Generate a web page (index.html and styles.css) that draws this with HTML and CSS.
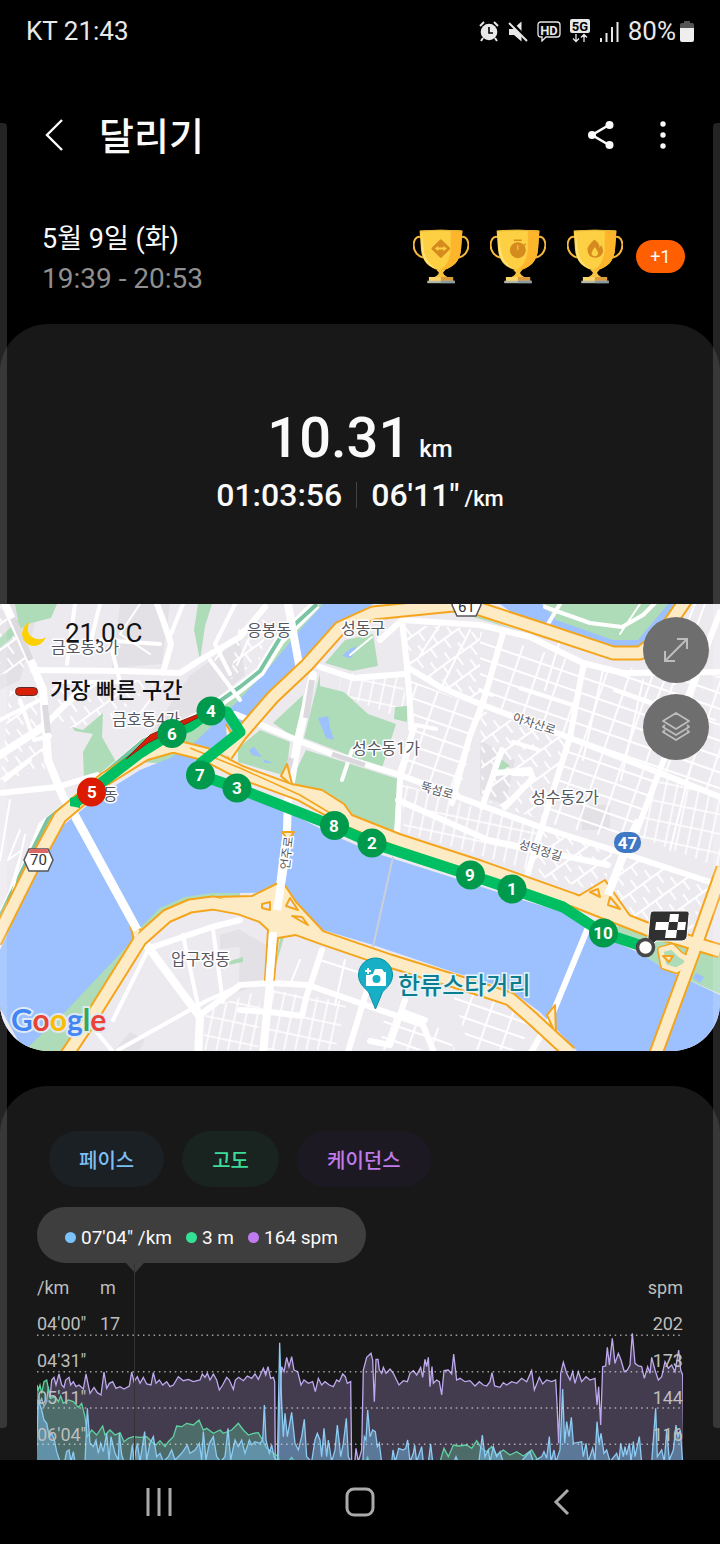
FILE: index.html
```html
<!DOCTYPE html>
<html lang="ko">
<head>
<meta charset="utf-8">
<meta name="viewport" content="width=device-width, initial-scale=1">
<title>달리기</title>
<link rel="stylesheet" href="styles.css">
</head>
<body>
<div class="edge edge-left"></div>
<div class="edge edge-right"></div>

<div class="status">
  <span>KT 21:43</span>
  <div class="status-icons">
    <svg width="20" height="21" viewBox="0 0 20 21" fill="none" stroke="#e8e8e8" stroke-width="2"><circle cx="10" cy="11" r="8.3" fill="#e8e8e8" stroke="none"/><path d="M1 5l4-4M19 5l-4-4M4 17l-2 3M16 17l2 3"/><path d="M10 6v6h4" stroke="#000" stroke-width="1.6"/></svg>
    <svg width="20" height="21" viewBox="0 0 20 21"><path d="M1 8h4l8.500-7.500v20L6 14H1z" fill="#e8e8e8"/><path d="M2.500 0.500L20 19" stroke="#000" stroke-width="3"/><path d="M1 2L19 20" stroke="#e8e8e8" stroke-width="2"/></svg>
    <svg class="hd" width="24" height="21" viewBox="0 0 24 21"><path d="M4 1h16q3 0 3 3v9q0 3-3 3H9l-4 4v-4H4q-3 0-3-3V4q0-3 3-3z" fill="none" stroke="#e8e8e8" stroke-width="1.300"/><text x="12" y="13.500" text-anchor="middle" font-size="13" font-weight="700" fill="#e8e8e8">HD</text></svg>
    <svg width="20" height="24" viewBox="0 0 20 24"><rect width="20" height="14" rx="2" fill="#e8e8e8"/><text x="10" y="12" text-anchor="middle" font-size="13" font-weight="700" fill="#000">5G</text><path d="M6 15v7M3 19.500l3 3 3-3M14 23v-7M11 18.500l3-3 3 3" fill="none" stroke="#e8e8e8" stroke-width="1.300"/></svg>
    <svg width="20" height="21" viewBox="0 0 20 21" stroke="#e8e8e8" stroke-width="2"><path d="M2 17v4M7.500 12v9M13 6v15M18.500 1v20"/></svg>
    <span class="battery-text">80%</span>
    <svg width="14" height="21" viewBox="0 0 14 21"><path d="M4 2V0h6v2h2q2 0 2 2v5H0V4q0-2 2-2z" fill="#555"/><path d="M0 7h14v12q0 2-2 2H2q-2 0-2-2z" fill="#eee"/></svg>
  </div>
</div>

<header class="bar">
  <button class="icon-btn" aria-label="뒤로"><svg width="20" height="32" viewBox="0 0 20 32"><path d="M18 1L3 16l15 15" fill="none" stroke="#fafafa" stroke-width="2.400"/></svg></button>
  <h1>달리기</h1>
  <button class="icon-btn share" aria-label="공유"><svg width="26" height="28" viewBox="0 0 26 28"><path d="M21 4L4 14l17 10" fill="none" stroke="#fafafa" stroke-width="2.600"/><g fill="#fafafa"><circle cx="21.500" cy="4" r="4"/><circle cx="4" cy="14" r="4"/><circle cx="21.500" cy="24" r="4"/></g></svg></button>
  <button class="icon-btn" aria-label="더보기"><svg width="6" height="28" viewBox="0 0 6 28" fill="#fafafa"><circle cx="3" cy="3" r="2.700"/><circle cx="3" cy="14" r="2.700"/><circle cx="3" cy="25" r="2.700"/></svg></button>
</header>

<section class="when">
  <div class="dates"><div>5월 9일 (화)</div><div class="time">19:39 - 20:53</div></div>
  <div class="awards">
    <svg width="0" height="0" class="defs"><defs>
      <symbol id="cup" viewBox="38 43 169 164">
        <path d="M65 67C38 58 34 96 48 115q7 9 20 13M180 67c27-9 31 29 17 48q-7 9-20 13" fill="none" stroke="#f5b83a" stroke-width="6"/>
        <path d="M58 47q64-6 129 0l-4 55c-3 45-33 60-61 66C94 162 65 147 62 102z" fill="#fdd043"/>
        <path d="M152 45l35 2-4 55c-3 45-33 60-61 66l-6-2c24-10 33-34 36-62z" fill="#fdb52b"/>
        <path d="M64 50l7 56c4 31 22 48 40 57-28-8-44-29-47-61z" fill="#fee27c"/>
        <path d="M60 48q62-5 125 0" fill="none" stroke="#e7b235" stroke-width="3"/>
        <path d="M108 165h28l-7 8q0 8 16 15h-45q16-7 16-15z" fill="#f8c23f"/>
        <path d="M86 187h73v12H86z" fill="#fcd56a"/><path d="M122 187h37v12h-37z" fill="#dd9c3c"/>
        <path d="M81 198h83v8H81z" fill="#b4b8a6"/><path d="M122 198h42v8h-42z" fill="#8a9ba1"/>
      </symbol>
    </defs></svg>
    <svg width="56" height="55" viewBox="38 43 169 164"><use href="#cup" x="38" y="43" width="169" height="164"/><rect x="101" y="80" width="42" height="42" rx="4" transform="rotate(45 122 101)" fill="#d68b1e"/><path d="M104 101l10-8v5h16v-5l10 8-10 8v-5h-16v5z" fill="#fdd043"/></svg>
    <svg width="56" height="55" viewBox="38 43 169 164"><use href="#cup" x="38" y="43" width="169" height="164"/><circle cx="122" cy="106" r="24" fill="#d68b1e"/><path d="M110 76h24M139 92l7-5" stroke="#d68b1e" stroke-width="4"/><path d="M122 90v16" stroke="#fdd043" stroke-width="3"/></svg>
    <svg width="56" height="55" viewBox="38 43 169 164"><use href="#cup" x="38" y="43" width="169" height="164"/><path d="M121 74q18 14 15 26l5-10q9 16 4 25-6 14-23 14-24-3-22-27 2-12 21-28z" fill="#d68b1e"/><path d="M122 97q14 16 8 24-8 7-16 0-6-9 8-24z" fill="#fdd043"/></svg>
    <span class="more">+1</span>
  </div>
</section>

<main>
<section class="card hero">
  <div class="distance"><span>10.31</span><small>km</small></div>
  <div class="pace"><span>01:03:56</span><i></i><span>06'11"</span><small>/km</small></div>
  <div class="map">
    <svg class="map-art" viewBox="0 604 720 447" role="img" aria-label="지도">
      <defs>
        <pattern id="s1" width="22" height="15" patternUnits="userSpaceOnUse" patternTransform="rotate(19)"><path d="M0 1h22M1 0v15" stroke="#fff" stroke-width="1.800"/></pattern>
        <pattern id="s2" width="11" height="19" patternUnits="userSpaceOnUse" patternTransform="rotate(12)"><path d="M0 1h11M1 0v19" stroke="#fff" stroke-width="1.500"/></pattern>
        <pattern id="s3" width="17" height="21" patternUnits="userSpaceOnUse" patternTransform="rotate(-36)"><path d="M0 1h17M1 0v12M10 12v9" stroke="#fff" stroke-width="1.800"/></pattern>
      </defs>
      <rect y="604" width="720" height="447" fill="#edeaef"/>
      <g fill="#e4e1e6">
        <path d="M0 604h40L20 680 0 690zM120 604h50l-8 60-50 4zM240 640l-50 35-40 60 40-15 55-45zM480 740l35 20-10 45-25-10zM580 805h30v25h-28zM240 930l35 20-6 30-30 12zM220 935l20-6v18l-20 2zM115 1050l15-18 15 8-5 10z"/>
      </g>
      <!-- side streets -->
      <path d="M480 632l103 32 137 12v118l-60-22-90-34-90-32z" fill="url(#s1)"/>
      <path d="M405 625l75 4v74l-73-32z" fill="url(#s3)"/>
      <path d="M410 680l70 28-22 92-52-20z" fill="url(#s1)"/>
      <path d="M480 710l90 30-28 80-60-20z" fill="url(#s3)"/>
      <path d="M572 740l86 34-30 68-85-20z" fill="url(#s1)"/>
      <path d="M662 776l58 22v70l-88-34z" fill="url(#s2)"/>
      <path d="M402 784l138 44-12 42-124-38z" fill="url(#s2)"/>
      <path d="M540 830l73 20-10 42-73-18zM625 855l85 28-20 50-80-22z" fill="url(#s3)"/>
      <path d="M272 990l75 12-12 48h-70zM205 1010l55-20-2 60h-55z" fill="url(#s2)"/>
      <path d="M385 1010l60 20 10 20h-75zM450 985l50 10 30 30-10 25h-50z" fill="url(#s1)"/>
      <path d="M10 690h30l5 80-45 10zM0 605l30 60-30 10z" fill="url(#s3)"/>
      <path d="M50 680h110l-50 40-50 10zM240 620l28 0-8 40-30 20z" fill="url(#s3)"/>
      <path d="M342 672l60 6 8 44-72-28z" fill="url(#s2)"/>
      <!-- parks -->
      <g fill="#aedbb8">
        <path d="M15 604h42l-6 14-24 6-27 24v-10l18-18zM198 604h14l-7 22-5 34-6-30zM72 727l11 3 20-17-1 24 18 32-36 9-1-26 10-18-18-3z"/>
        <path d="M320 604L240 686l-50 34-50 42 60 4 170-162z"/>
        <path d="M325 663l20-23 28-6 5 32-26 5zM320 674l-16 64 78 30 14-44-28-10-24-22-24-6zM306 750l92 29-4 57-30-4-20-25-55-22zM273 723l30-28-5 45zM238 748l22-18 30 12-4 34-48-14zM395 707l12-1v16l-13-3z"/>
        <path d="M545 604h126l-32 38h-28l-64-20zM498 762l2-4 10 8-12 6zM230 961l13-4v5l-15 3zM280 938l4-1-8 28zM480 617l-20-4 60 18z"/>
        <path d="M240 889L213 890 185 893 160 904 140 924 128 940 64 1005 20 1051H72L112 985 150 935 185 905 240 905z"/>
      </g>
      <g fill="#9dc1fe">
        <path d="M0 950L30 885 60 828 100 795 140 770 170 758 195 742 240 699 273 663 300 630 323 604H373L340 627 307 660 270 703 240 728 205 757 200 770 240 795 290 813 333 835 372 852 470 883 512 897 563 912 603 937 640 953 667 970 720 995V1051H577L560 1033 540 1012 510 990 480 980 453 972 373 945 323 930 300 912 283 892 240 893 213 893 185 897 160 908 140 928 133 940 67 1010 24 1051 0 1020z"/>
        <path d="M500 604h42l14 16 57 20h25l30-36h16l-22 34-24 14h-28l-80-26z"/>
        <path d="M342 656l8-7 7-3-6 12zM318 718l10-2 2 12 4 12-8-2zM249 750l5-3 8 10-10-2zM263 759l10 4h-8z"/>
      </g>
      <path d="M612 932l28 21 27 17 53 24v-44l-100-26z" fill="#aedbb8"/>
      <path d="M693 978l3-5 8 4-4 6z" fill="#9dc1fe"/>
      <path d="M0 1008L24 1051H0z" fill="#edeaef"/>
      <path d="M316 604L280 640l-20 32-20 16-40 28-57 28-43 36-57 46-14 35-30 62" fill="none" stroke="#fff" stroke-width="10"/>
      <path d="M317 604L280 638l-20 33-20 16-40 28-57 26-43 36-52 42-20 40-30 62" fill="none" stroke="#7ac3a3" stroke-width="4"/>
      <!-- streets -->
      <g fill="none" stroke="#fff" stroke-linejoin="round" stroke-linecap="round">
        <g stroke-width="8"><path d="M5 604l28 62 10 24 5 70 15 37 12 18 68 125 57 77-2 40"/><path d="M288 604l12 66M313 675l-15 65-10 60-1 30-10 80-7 73-7 70"/><path d="M-5 758l48-31"/></g>
        <g stroke-width="6">
          <path d="M33 670l90 1 57 2 20-13 40-23 25-30M157 604l6 16 8 24-8 29M0 793l57-6 40-12M43 727l44-44"/>
          <path d="M235 714l62 26 33 13 70 22 80 30 60 22 73 23 97 32"/>
          <path d="M402 620l5 47 5 66-12 47-3 55M380 640l22-20 78 5 50 12 53 26 40 10 97-1"/>
          <path d="M407 667l33 20 40 17 90 34 90 35 60 24M320 667l33 11 52-4M503 633l-20 70-13 32-18 68M583 667l-13 70-27 86-15 50M720 612l-57 150-26 68-32 65M530 770l-36 3-12 34M494 772l8-22M513 773l18 0 1 6-27 28"/>
          <path d="M587 930l-37 90-20 34M398 800l90 40 120 25"/>
          <path d="M150 948l62-21 28-7M200 1015l40-30 30-2 38 2 115 40 10 25M322 950l-16 48-4 18-32-4-30-2M370 980l-22 72M405 1000l-15 45-20-4M425 1020l-22-8"/>
        </g>
        <path stroke-width="4" d="M60 682l60 0-10-40M75 604l-8 60M100 640l60 4M100 604l-10 40M183 604l-12 30M210 660l30 40M235 604l-20 40 15 30M30 760l-25 20M20 700l14 40 16-4M0 720l40-20M183 935l16 75M213 930l10 72M118 1050l90-50 32-14M95 1030l18 22M148 950l-35 70M352 750l-10 30M398 775l18-50 20 4M520 688l56 18M615 690l46 17M480 690l12 5M513 742l26 8M545 607l45 16 32 4 21-12 12-12M560 604l-12 20"/>
        <path stroke-width="2" d="M10 800l-10 60M20 830l-12 30 14-10-12 40M25 835l-15 70M165 680l-30 40M140 604l-20 30 30 20M230 640l-15 20M255 625l-18 40M350 655l22-18M320 960l50 16M345 960l-10 45M300 960l-10 25M640 604l-20 30M695 604l-40 100M705 604l-30 80M655 700l60 20M560 640l-15 50M603 670l-20 90M643 680l-22 100M690 770l-20 80M440 625l-20 30M470 630l-30 60"/>
      </g>
      <path d="M393 857l-20 90" stroke="#c9cfda" stroke-width="2"/>
      <path d="M332 754l33 11" stroke="#dbd8dd" stroke-width="5"/><path d="M13 618l18 42M45 705l3 28M312 680l-6 38M291 758l-4 16" stroke="#dcd9df" stroke-width="6"/>
      <!-- expressways -->
      <g fill="none" stroke-linejoin="round">
        <g stroke="#f4a51c" stroke-width="15">
          <path d="M-5 942l35-70 30-55 45-38 40-25 28-8 32 8 35 18 60 22 47 26 53 21 80 26 93 33 74 29 73 22"/>
          <path d="M226 755l14-20 33-38 34-32 33-37 33-15 80-8 27 4 67 22 66 22h27l20-15 27-40"/>
          <path d="M66 1056l24-36 50-80 27-24 23-10 23-3 27 5 83 30 67 23 90 28 30 10 23 20 37 34"/>
          <path d="M655 1056l38-103 30-85"/>
        </g>
        <g stroke="#f4a51c" stroke-width="2" fill="#fdebc5">
          <path d="M216 897L252 896 276 884 284 884 296 902 326 934 284 922 240 908z"/>
          <path d="M250 913L268 930 265 980 274 980 278 938 302 934z"/>
          <path d="M575 898l30-18 28 40zM547 1015l8-10 1 30z"/><path d="M281 776l6-12 5 20 30 6 22 14 20 28-60-36z"/>
          <path d="M129 920l12 10-6 14zM226 724l8 14-6 20"/>
          <path d="M661 950L672 947 680 955 692 962 676 970 664 966z" stroke-width="8"/>
          <path d="M661 950L672 947 680 955 692 962 676 970 664 966z" stroke="#fdebc5" stroke-width="5" fill="#aedbb8"/>
          <path d="M663 956h10l-4 6zM282 832h12l-6 8z"/>
          <path d="M262 904l8-2v8l-8-2zM286 906l4-8 8 12zM292 916l10 1 6 8zM590 892l8-3 2 8zM610 897l10 12-12-4z" fill="#edeaef"/>
        </g>
        <g stroke="#fdebc5" stroke-width="11">
          <path d="M-5 942l35-70 30-55 45-38 40-25 28-8 32 8 35 18 60 22 47 26 53 21 80 26 93 33 74 29 73 22"/>
          <path d="M226 755l14-20 33-38 34-32 33-37 33-15 80-8 27 4 67 22 66 22h27l20-15 27-40"/>
          <path d="M66 1056l24-36 50-80 27-24 23-10 23-3 27 5 83 30 67 23 90 28 30 10 23 20 37 34"/>
          <path d="M655 1056l38-103 30-85"/>
        </g>
        <path d="M190 748l50 20 60 27 40 24" stroke="#f4a51c" stroke-width="1.500"/>
        <path d="M288 840L277 910M273 932L269 985M608 895l19-50 12-25M75 817l62 113" stroke="#fff" stroke-width="8"/>
      </g>
      <!-- place labels -->
      <g class="place">
        <text x="51" y="653">금호동3가</text><text x="112" y="725">금호동4가</text><text x="247" y="636">응봉동</text><text x="341" y="634">성동구</text><text x="352" y="754">성수동1가</text><text x="531" y="803">성수동2가</text><text x="171" y="965">압구정동</text><text x="103" y="800">동</text>
      </g>
      <g class="street">
        <text transform="translate(512 721) rotate(18)">아차산로</text><text transform="translate(420 790) rotate(16)">뚝섬로</text><text transform="translate(518 848) rotate(17)">성덕정길</text><text transform="translate(289 870) rotate(-83)">언주로</text>
      </g>
      <!-- route -->
      <path d="M75 803l30-23 35-27 32-20 18-7 21-15 16 1 13 20-39 31-1 12 37 13 97 38 38 17 98 32 42 14 51 18 40 26 42 14" fill="none" stroke="#00bf63" stroke-width="11" stroke-linejoin="round"/>
      <path d="M70 798l10-2v12l-10-2z" fill="#00bf63"/>
      <path d="M211 709l-30 12-31 14-14 14-10 10 22-16 26-13 37-19z" fill="#d61f08" stroke="#8c2414" stroke-width="1"/>
      <g fill="#009a4c">
        <circle cx="512" cy="889" r="14.500"/><circle cx="372" cy="843" r="14.500"/><circle cx="237" cy="788" r="14.500"/><circle cx="211" cy="711" r="14.500"/><circle cx="91.500" cy="792" r="14.500" fill="#dc1a00"/><circle cx="172" cy="733.500" r="14.500"/><circle cx="200.500" cy="775" r="14.500"/><circle cx="334.500" cy="825.500" r="14.500"/><circle cx="470.500" cy="875" r="14.500"/><circle cx="603.500" cy="933" r="14.500"/>
      </g>
      <g class="stop-no"><text x="512" y="895">1</text><text x="372" y="849">2</text><text x="237" y="794">3</text><text x="211" y="717">4</text><text x="92" y="798">5</text><text x="172" y="740">6</text><text x="200" y="781">7</text><text x="334" y="832">8</text><text x="470" y="881">9</text><text x="603" y="939">10</text></g>
      <path d="M653 911h33q4 0 3 4l-2 22q-1 4-5 4h-26l-8 8 0-12 2-22q0-4 3-4z" fill="#303030" stroke="#fff" stroke-width="1"/>
      <path d="M670 914h9l-1 8h-9zM656 922h13l-1 8h-13zM678 922h8l-1 8h-8zM666 930h11l-1 8h-11z" fill="#fff"/>
      <circle cx="645.500" cy="947.500" r="8" fill="#fff" stroke="#484848" stroke-width="3.500"/>
      <!-- shields -->
      <path d="M29 849h19l5 11-5 11H29l-5-11z" fill="#fff" stroke="#55555c" stroke-width="1.500"/><path d="M30 849h17l2 4H28z" fill="#d66"/><text class="shield" x="38.500" y="865">70</text>
      <path d="M457 592h19l5 13-5 11h-19l-5-11z" fill="#fff" stroke="#55555c" stroke-width="1.500"/><text class="shield" x="466.500" y="612">61</text>
      <rect x="614" y="832" width="27" height="21" rx="10" fill="#3f78c4"/><text class="route-no" x="627.500" y="849">47</text>
      <!-- attraction pin -->
      <path d="M375.500 1009l-7-17c-6-6-10-10-10-17a17 17 0 0 1 34 0c0 7-4 11-10 17z" fill="#17afc5" stroke="#0b8fa4" stroke-width="1"/>
      <path d="M366 974h7l2-5h7l2 3h2v14h-20z" fill="#fff"/><circle cx="376.500" cy="979" r="4" fill="#17afc5"/><path d="M364 971h8M368 967v8" stroke="#17afc5" stroke-width="5"/><path d="M365 971h6M368 968v6" stroke="#fff" stroke-width="2"/>
      <text class="sight" x="398" y="994">한류스타거리</text>
      <text class="google" x="11" y="1031"><tspan fill="#4285f4">G</tspan><tspan fill="#ea4335">o</tspan><tspan fill="#fbbc05">o</tspan><tspan fill="#4285f4">g</tspan><tspan fill="#34a853">l</tspan><tspan fill="#ea4335">e</tspan></text>
    </svg>
    <div class="map-info">
      <div class="weather"><svg width="24" height="25" viewBox="0 0 24 25"><path d="M8 1C4 7 5 16 15 18q5 1 9-2-4 9-13 9Q1 23 0 13 1 4 8 1z" fill="#fdd000"/></svg><span>21.0°C</span></div>
      <div class="legend"><i></i><span>가장 빠른 구간</span></div>
    </div>
    <div class="map-tools">
      <button aria-label="지도 확대"><svg width="26" height="26" viewBox="0 0 26 26" fill="none" stroke="#bdbdbd" stroke-width="2"><path d="M2 24L24 2M14 2h10v10M2 14v10h10"/></svg></button>
      <button aria-label="지도 유형"><svg width="30" height="30" viewBox="0 0 30 30" fill="none" stroke="#bdbdbd" stroke-width="1.800" stroke-linejoin="round"><path d="M15 1l13 8-13 8L2 9zM4 13l-2 2 13 8 13-8-2-2M4 18l-2 2 13 8 13-8-2-2"/></svg></button>
    </div>
  </div>
</section>

<section class="card detail">
  <div class="chips"><button class="chip blue">페이스</button><button class="chip green">고도</button><button class="chip purple">케이던스</button></div>
  <div class="tip"><span class="blue">07'04" /km</span><span class="green">3 m</span><span class="purple">164 spm</span></div>
  <div class="chart">
    <div class="guide"></div>
    <svg class="plot" viewBox="111 180 1938 390" preserveAspectRatio="none" role="img" aria-label="페이스, 고도, 케이던스 그래프">
      <path class="area cadence" d="M108 580 111,390 118,400 125,385 132,410 140,395 145,350 150,385 155,330 162,322 168,345 177,312 185,345 192,352 197,330 207,322 212,345 220,335 228,350 237,345 250,357 258,312 270,370 282,352 292,368 303,375 312,306 320,355 328,340 338,335 348,355 360,350 372,357 388,348 395,306 402,335 412,320 420,340 430,322 440,342 453,345 460,308 468,340 478,330 488,345 500,335 510,350 520,345 535,320 550,332 565,328 580,335 600,330 607,312 615,322 622,310 630,330 640,312 650,330 658,360 668,345 680,322 688,330 700,358 706,330 716,322 730,332 742,318 755,325 765,312 775,328 790,295 797,315 804,290 812,325 820,322 824,335 826,580 835,580 838,420 845,290 852,305 860,262 867,290 875,260 882,300 893,305 903,345 912,330 925,340 938,335 946,365 955,325 965,345 975,335 988,345 1000,350 1010,330 1018,335 1028,312 1036,320 1042,340 1052,335 1055,580 1064,580 1068,535 1075,575 1085,540 1090,300 1100,262 1113,250 1118,270 1123,395 1128,268 1134,268 1138,300 1145,310 1150,292 1158,310 1170,297 1180,310 1197,345 1210,332 1222,335 1230,310 1240,302 1250,315 1262,292 1268,322 1275,268 1280,290 1285,262 1290,350 1296,290 1300,340 1310,330 1318,335 1325,375 1332,302 1345,300 1355,312 1361,252 1370,330 1380,325 1395,335 1410,332 1425,348 1438,335 1450,345 1460,348 1470,335 1476,308 1484,348 1500,352 1510,338 1520,345 1535,335 1550,340 1565,325 1580,335 1595,302 1603,360 1618,322 1628,342 1640,330 1655,335 1667,330 1671,400 1676,520 1682,310 1690,277 1700,310 1710,330 1718,305 1725,340 1735,305 1745,335 1758,320 1770,330 1785,325 1791,405 1796,350 1802,465 1808,290 1817,288 1822,232 1828,285 1837,205 1845,280 1855,250 1863,270 1873,305 1882,300 1890,285 1897,190 1905,280 1915,288 1925,290 1933,325 1943,290 1950,310 1955,262 1965,300 1975,330 1985,320 1995,275 2005,295 2015,285 2025,305 2036,240 2042,300 2048,315 2052,580z"/>
      <path class="area height" d="M108 580 111,345 115,360 120,345 125,370 132,335 140,330 146,360 152,385 165,380 175,395 182,378 190,400 205,390 220,395 235,412 245,400 255,440 262,500 275,480 290,495 308,468 315,495 330,480 345,495 360,488 372,515 385,505 400,500 420,502 440,500 455,515 468,525 480,512 495,530 505,515 520,500 530,468 545,470 560,460 580,465 597,450 610,480 620,475 640,490 660,480 670,490 695,480 715,460 730,480 745,495 760,490 775,488 790,515 800,535 815,545 835,560 840,580 865,575 875,562 885,578 1095,580 1103,562 1108,580 1320,575 1332,535 1345,560 1360,525 1375,528 1400,525 1415,535 1430,512 1445,535 1460,545 1475,530 1490,555 1510,540 1530,555 1550,545 1570,558 1595,540 1610,565 1620,580z"/>
      <path class="area speed" d="M108 580 115,390 125,420 132,450 140,460 148,500 155,490 163,510 170,545 180,575 195,570 200,545 207,540 213,575 220,545 225,575 255,575 262,415 270,520 280,530 288,510 295,550 302,520 310,545 320,490 327,570 333,500 345,550 355,570 358,490 365,555 372,575 390,575 397,525 402,570 412,520 420,575 434,485 440,570 450,520 460,500 470,560 480,550 490,575 505,560 515,540 525,570 545,550 562,525 570,550 585,540 598,520 605,570 610,485 618,570 628,520 640,500 650,560 662,575 675,560 684,475 692,570 705,510 715,530 725,510 735,550 748,510 755,525 765,515 780,520 788,510 793,405 798,510 808,550 815,525 822,560 832,575 839,218 845,400 850,500 855,430 862,500 875,427 885,520 895,540 905,500 913,448 920,560 935,575 945,510 952,490 960,510 965,560 972,475 980,560 985,510 995,575 1005,540 1012,465 1022,560 1030,520 1039,445 1045,560 1055,580 1088,580 1093,500 1098,510 1103,420 1110,500 1118,480 1126,485 1132,530 1138,520 1145,578 1175,578 1179,540 1186,575 1196,535 1210,540 1217,535 1223,510 1230,575 1240,550 1244,525 1250,575 1265,530 1270,578 1285,578 1292,522 1298,575 1315,580 1360,580 1368,560 1375,578 1385,580 1436,580 1447,495 1455,560 1465,540 1470,575 1480,530 1490,560 1500,545 1510,578 1560,578 1590,545 1600,575 1625,560 1632,545 1640,565 1648,500 1653,575 1662,540 1668,575 1680,540 1688,357 1694,520 1700,455 1707,500 1714,442 1720,520 1745,515 1750,560 1758,520 1765,575 1778,535 1785,570 1791,455 1797,520 1803,490 1812,550 1820,540 1830,575 1850,550 1857,575 1862,520 1870,560 1875,530 1880,555 1888,520 1893,575 1900,515 1905,560 1918,500 1925,578 1955,578 1967,415 1972,560 1985,540 1993,575 2000,480 2008,570 2020,540 2028,465 2034,500 2041,480 2048,580z"/>
      <path class="grid" d="M111 196H2049M111 305H2049M111 414H2049M111 523H2049"/>
    </svg>
    <div class="axis left"><b>/km</b><span>04'00"</span><span>04'31"</span><span>05'11"</span><span>06'04"</span></div>
    <div class="axis second"><b>m</b><span>17</span></div>
    <div class="axis right"><b>spm</b><span>202</span><span>173</span><span>144</span><span>116</span></div>
  </div>
</section>
</main>

<nav>
  <button aria-label="최근 앱"><svg width="28" height="28" viewBox="0 0 28 28" stroke="#aaa" stroke-width="3"><path d="M3 0v28M14 0v28M25 0v28"/></svg></button>
  <button aria-label="홈"><svg width="30" height="30" viewBox="0 0 30 30"><rect x="2" y="2" width="26" height="26" rx="7" fill="none" stroke="#aaa" stroke-width="3"/></svg></button>
  <button aria-label="뒤로 가기"><svg width="18" height="28" viewBox="0 0 18 28"><path d="M16 2L4 14l12 12" fill="none" stroke="#aaa" stroke-width="3"/></svg></button>
</nav>
</body>
</html>
```
FILE: styles.css
```css
* { box-sizing: border-box; }

body {
  margin: 0;
  min-height: 100vh;
  display: flex;
  flex-direction: column;
  position: relative;
  background: #000;
  color: #fafafa;
  font-family: Roboto, "Noto Sans CJK KR", sans-serif;
}

button {
  padding: 0;
  border: 0;
  background: none;
  color: inherit;
  font: inherit;
}

svg { display: block; flex: none; }

.defs { position: absolute; }

/* edge-panel strips over the page sides */
.edge {
  position: absolute;
  z-index: 2;
  top: 123px;
  bottom: 116px;
  width: 7px;
  background: rgba(255, 255, 255, .14);
  pointer-events: none;
}
.edge-left { left: 0; border-radius: 0 4px 4px 0; }
.edge-right { right: 0; border-radius: 4px 0 0 4px; }

.status {
  height: 62px;
  padding: 0 26px;
  display: flex;
  align-items: center;
  justify-content: space-between;
  font-size: 26px;
  color: #e8e8e8;
}
.status-icons { display: flex; align-items: center; gap: 9px; }
.battery-text { margin-right: -5px; }

.bar {
  height: 146px;
  padding: 0 54px 0 44px;
  display: flex;
  align-items: center;
}
.bar h1 {
  flex: 1;
  margin: 0 0 0 35px;
  padding-top: 4px;
  font-size: 38px;
  font-weight: 500;
  line-height: 48px;
}
.share { margin-right: 46px; }

.when {
  padding: 11px 35px 25px 42px;
  display: flex;
  align-items: center;
  justify-content: space-between;
}
.dates { font-size: 27px; line-height: 40px; }
.time { font-size: 28px; color: #8f8f8f; }
.awards { display: flex; align-items: center; gap: 21px; padding-bottom: 5px; }
.more {
  width: 49px;
  height: 33px;
  margin-left: -8px;
  border-radius: 17px;
  background: #ff5f00;
  font-size: 18px;
  line-height: 34px;
  text-align: center;
}

main { flex: 1; display: flex; flex-direction: column; }
.card { background: #181818; overflow: hidden; }

.hero {
  border-radius: 48px;
  margin-bottom: 35px;
  padding-top: 78px;
  font-weight: 500;
}
.distance, .pace { display: flex; justify-content: center; align-items: baseline; }
.distance { height: 72px; gap: 9px; font-size: 56px; line-height: 72px; }
.distance small { font-size: 24px; }
.pace { height: 42px; margin-bottom: 88px; font-size: 32px; line-height: 42px; }
.pace i { align-self: center; width: 1px; height: 26px; margin: 0 14px; background: #444; }
.pace small { margin-left: 5px; font-size: 22px; }

.map { position: relative; font-weight: 400; }
.map-art { width: 100%; height: auto; }
.map-art text { font-family: Roboto, "Noto Sans CJK KR", sans-serif; }
.place, .street { fill: #55575f; stroke: #fff; stroke-width: 3px; stroke-linejoin: round; paint-order: stroke; }
.place { font-size: 16px; }
.street { font-size: 12px; }
.stop-no { font-size: 17px; font-weight: 700; fill: #fff; text-anchor: middle; }
.shield { font-size: 15px; fill: #333; text-anchor: middle; }
.route-no { font-size: 17px; font-weight: 700; fill: #fff; text-anchor: middle; }
.sight { font-size: 24px; font-weight: 500; fill: #0d7d90; stroke: #e4f4f8; stroke-width: 3px; paint-order: stroke; }
.map-art .google { font-family: Lato, sans-serif; font-size: 30px; font-weight: 700; stroke: #dfe9f5; stroke-width: 4px; paint-order: stroke; }

.map-info { position: absolute; left: 15px; top: 11px; color: #111; }
.weather { display: flex; align-items: center; gap: 19px; padding-left: 7px; font-size: 26px; line-height: 36px; }
.legend { display: flex; align-items: center; gap: 12px; margin-top: 22px; font-size: 22px; font-weight: 500; line-height: 36px; }
.legend i { width: 23px; height: 9px; border: 1px solid #5e2a24; border-radius: 5px; background: #d81f08; }

.map-tools { position: absolute; right: 11px; top: 13px; display: grid; gap: 11px; }
.map-tools button {
  width: 66px;
  height: 66px;
  border-radius: 50%;
  background: #6e6e6e;
  display: grid;
  place-items: center;
}

.detail { flex: 1; border-radius: 48px 48px 0 0; padding: 45px 37px 0; }
.chips { display: flex; gap: 18px; padding-left: 12px; }
.chip {
  height: 56px;
  padding: 0 30px;
  border-radius: 28px;
  font-size: 20px;
  font-weight: 500;
}
.chip.blue { color: #7cbff5; background: #1b2024; }
.chip.green { color: #3edb98; background: #19231f; }
.chip.purple { color: #c07bea; background: #1d1923; }

.tip {
  position: relative;
  width: fit-content;
  height: 56px;
  margin-top: 20px;
  padding: 4px 28px 0;
  border-radius: 28px;
  background: #3e3e3e;
  display: flex;
  align-items: center;
  gap: 14px;
  font-size: 20px;
}
.tip span { display: flex; align-items: center; gap: 5px; }
.tip { font-size: 19px; }
.tip span::before { content: ""; width: 11px; height: 11px; border-radius: 50%; background: currentColor; }
.tip span.blue::before { background: #79c2fc; }
.tip span.green::before { background: #33e297; }
.tip span.purple::before { background: #c07bf0; }
.tip::after {
  content: "";
  position: absolute;
  left: 89px;
  top: 56px;
  border: 9px solid transparent;
  border-top: 10px solid #3e3e3e;
  border-bottom: 0;
}

.chart { position: relative; padding-top: 67px; }
.plot { width: 100%; height: 130px; }
.guide { position: absolute; left: 97px; top: 0; bottom: 0; width: 1px; background: #333; }
.area { stroke-width: 1.3px; }
.area, .grid { vector-effect: non-scaling-stroke; }
.cadence { fill: rgba(192, 165, 240, .26); stroke: #bfa9ee; }
.height { fill: rgba(96, 190, 150, .36); stroke: #5fd3a0; }
.speed { fill: rgba(120, 185, 235, .48); stroke: #8ccbf2; }
.grid { fill: none; stroke: rgba(230, 230, 230, .65); stroke-width: 1.5px; stroke-dasharray: 1.5px 3.8px; }

.axis {
  position: absolute;
  top: 8px;
  display: flex;
  flex-direction: column;
  font-size: 18px;
  line-height: 37px;
  color: #bebebe;
}
.axis b { font-weight: 400; line-height: 34px; }
.left { left: 0; }
.second { left: 63px; }
.right { right: 0; text-align: right; }

nav {
  position: relative;
  z-index: 3;
  height: 84px;
  padding: 0 58px;
  background: #000;
  display: grid;
  grid-template-columns: repeat(3, 1fr);
}
nav button { display: grid; place-items: center; }
```
